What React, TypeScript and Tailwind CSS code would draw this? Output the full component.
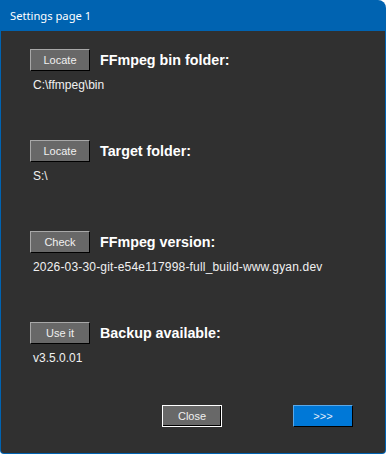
import React from "react";

const grayBtn =
  "w-[60px] h-[22px] bg-[#686868] border-t border-l border-t-[#a8a8a8] border-l-[#a8a8a8] border-b border-r border-b-black border-r-black text-[11px] text-[#f0f0f0] flex items-center justify-center leading-none";

function Row({ btn, title, value, wide }: { btn: string; title: string; value: string; wide?: boolean }) {
  return (
    <div className="flex flex-col">
      <div className="flex items-center gap-[10px] h-[22px]">
        <div className={grayBtn}>{btn}</div>
        <div className="text-[14.3px] font-bold text-white leading-none">{title}</div>
      </div>
      <div
        className={
          wide
            ? "mt-[7px] pl-[3px] text-[12px] leading-[14px] text-[#f0f0f0] tracking-[0.18px]"
            : "mt-[7px] pl-[3px] text-[12px] leading-[14px] text-[#f0f0f0]"
        }
      >
        {value}
      </div>
    </div>
  );
}

export default function App() {
  return (
    <div
      className="w-[386px] h-[454px] flex flex-col bg-[#0063b1] rounded-tr-[8px] rounded-b-[4px] p-px overflow-hidden"
      style={{ fontFamily: '"Liberation Sans", Arial, sans-serif' }}
    >
      <div
        className="h-[30px] flex items-center pl-[9px] text-white text-[11.2px]"
        style={{ fontFamily: '"Noto Sans", sans-serif' }}
      >
        Settings page 1
      </div>
      <div className="flex-1 bg-[#303030] rounded-b-[3px] flex flex-col pt-[18px] pl-[29px]">
        <div className="flex flex-col gap-[48px]">
          <Row btn="Locate" title="FFmpeg bin folder:" value="C:\ffmpeg\bin" />
          <Row btn="Locate" title="Target folder:" value="S:\" />
          <Row btn="Check" title="FFmpeg version:" value="2026-03-30-git-e54e117998-full_build-www.gyan.dev" wide />
          <Row btn="Use it" title="Backup available:" value="v3.5.0.01" />
        </div>
        <div className="flex mt-[40px] pl-[132px] gap-[71px]">
          <div className="w-[60px] h-[22px] bg-[#686868] border border-white shadow-[inset_-1px_-1px_0_#000] text-[11px] text-[#f0f0f0] flex items-center justify-center leading-none">
            Close
          </div>
          <div className="w-[60px] h-[22px] bg-[#0078d7] border-t border-l border-t-[#5aa8e8] border-l-[#5aa8e8] border-b border-r border-b-black border-r-black text-[11px] text-[#e6eefa] flex items-center justify-center leading-none">
            &gt;&gt;&gt;
          </div>
        </div>
      </div>
    </div>
  );
}
